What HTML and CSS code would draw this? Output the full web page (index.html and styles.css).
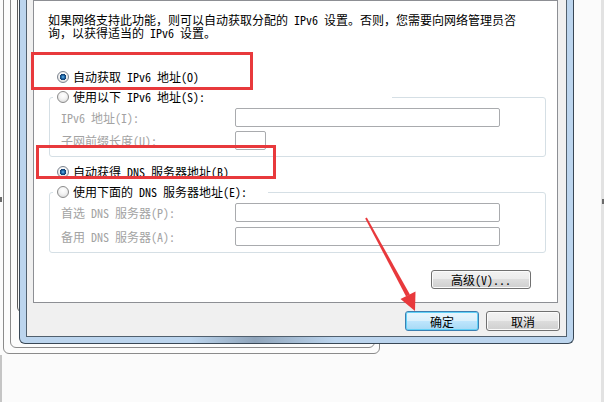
FILE: index.html
```html
<!DOCTYPE html>
<html>
    <head>
        <meta charset="utf-8">
        <title>Internet 协议版本 6 (TCP/IPv6) 属性</title>
        <link rel="stylesheet" href="styles.css">
    </head>
    <body>
        <div class="desk">
            <div class="win win-outer"></div>
            <div class="win win-middle"></div>
            <div class="win win-inner"></div>
            <div class="edge-left"></div>
            <div class="edge-right"></div>
            <div class="tick tick-left"></div>
            <div class="tick tick-right"></div>

            <div class="dialog">
                <div class="face">
                    <div class="panel">
                        <p class="intro"><span class="line">如果网络支持此功能<span class="fw">，</span>则可以自动获取分配的 IPv6 设置<span class="fw">。</span>否则<span class="fw">，</span>您需要向网络管理员咨</span><span class="line">询<span class="fw">，</span>以获得适当的 IPv6 设置<span class="fw">。</span></span></p>

                        <div class="option first"><span class="radio checked"></span>自动获取 IPv6 地址(O)</div>
                        <fieldset class="group">
                            <legend class="option legend-ip"><span class="radio"></span>使用以下 IPv6 地址(S):</legend>
                            <div class="fields">
                                <span class="off">IPv6 地址(I):</span><span class="box wide"></span>
                                <span class="off">子网前缀长度(U):</span><span class="box narrow"></span>
                            </div>
                        </fieldset>

                        <div class="option second"><span class="radio checked"></span>自动获得 DNS 服务器地址(B)</div>
                        <fieldset class="group">
                            <legend class="option legend-dns"><span class="radio"></span>使用下面的 DNS 服务器地址(E):</legend>
                            <div class="fields dns">
                                <span class="off">首选 DNS 服务器(P):</span><span class="box wide"></span>
                                <span class="off">备用 DNS 服务器(A):</span><span class="box wide"></span>
                            </div>
                        </fieldset>

                        <div class="adv-row"><button class="btn adv">高级(V)...</button></div>
                    </div>
                    <div class="actions">
                        <button class="btn default">确定</button>
                        <button class="btn">取消</button>
                    </div>
                </div>
            </div>

            <!-- 标注 -->
            <div class="note note-ip"></div>
            <div class="note note-dns"></div>
            <svg class="arrow" width="604" height="402" viewBox="0 0 604 402">
                <polygon points="365.2,218.4 366.8,217.6 409.9,294.6 406.1,296.4" fill="#e8393c"/>
                <polygon points="415,311 400.5,299 415.5,291.5" fill="#e8393c"/>
            </svg>
        </div>
    </body>
</html>
```

FILE: styles.css
```css
body{
    margin: 0;
    background-color: #fbfbfb;
    font-family: "Noto Sans CJK SC", sans-serif;
    font-size: 12px;
    font-feature-settings: "hwid" 1;
    color: #000;
}
.desk{
    position: relative;
    width: 604px;
    height: 402px;
    overflow: hidden;
}

/* 뒤에 깔린 창들 */
.win{
    position: absolute;
    top: -10px;
    box-sizing: border-box;
    border: 1px solid #8b8b8b;
    border-radius: 0 0 6px 6px;
    background-color: #fcfcfc;
}
.win-outer{
    left: 3px;
    width: 377px;
    height: 364px;
}
.win-middle{
    left: 10px;
    width: 365px;
    height: 358px;
}
.win-inner{
    left: 17px;
    width: 200px;
    height: 323px;
    border-color: #5c5c5c;
}
.edge-left{
    position: absolute;
    left: 0;
    top: 355px;
    width: 2px;
    height: 47px;
    background-color: #c5c5c5;
}
.edge-right{
    position: absolute;
    right: 0;
    top: 0;
    width: 3px;
    height: 402px;
    background-color: #e2e2e2;
}
.tick{
    position: absolute;
    width: 2px;
    height: 5px;
    background-color: #6a6a6a;
}
.tick-left{
    left: 0;
    top: 197px;
}
.tick-right{
    left: 602px;
    top: 199px;
}

/* 대화상자 */
.dialog{
    position: absolute;
    left: 19px;
    top: 0;
    width: 555px;
    height: 344px;
    box-sizing: border-box;
    border: 1px solid #394856;
    border-top: none;
    border-radius: 0 0 6px 6px;
    padding: 0 6px 6px;
    background: linear-gradient(90deg, #bcd5ee 0, #bcd5ee 170px, #8fa4ba 235px, #bcd5ee 315px, #bcd5ee 100%);
}
.face{
    height: 100%;
    box-sizing: border-box;
    border: 1px solid #51606e;
    border-top: none;
    padding: 0 8px 0 6px;
    background-color: #f0f0f0;
    display: flex;
    flex-direction: column;
}
.panel{
    height: 303px;
    box-sizing: border-box;
    border: 1px solid #8d8f94;
    background-color: #fff;
    padding: 12px 11px 0 14px;
}
.intro{
    margin: 0;
    white-space: nowrap;
}
.intro .line{
    display: block;
    height: 13px;
    line-height: 13px;
}
.fw{
    font-feature-settings: normal;    /* 전각 문장부호는 그대로 */
}
.option{
    display: flex;
    align-items: center;
    height: 14px;
    line-height: 14px;
    white-space: nowrap;
}
.option.first{
    margin: 31px 0 0 9px;
}
.option.second{
    margin: 8px 0 0 9px;
}
.radio{
    flex: none;
    width: 12px;
    height: 12px;
    box-sizing: border-box;
    border: 1px solid #8b8b8b;
    border-radius: 50%;
    margin-right: 4px;
    background: radial-gradient(circle at 50% 35%, #ffffff 0, #f3f3f3 45%, #d2d2d2 100%);
}
.radio.checked{
    border-color: #7d8590;
    background: radial-gradient(circle, #6cc0ee 0, #2468a8 1.6px, #0f3c6d 3px, rgba(255,255,255,0) 3.4px),
                radial-gradient(circle at 50% 35%, #ffffff 0, #f3f3f3 45%, #d2d2d2 100%);
}

.group{
    margin: 6px 0 0 1px;
    border: 1px solid #d5dfe5;
    border-radius: 3px;
    padding: 4px 0 6px 3px;
    min-width: 0;
}
.group legend{
    box-sizing: border-box;
    padding: 0 0 0 4px;
    margin: 0;
    background-color: #fff;
}
.legend-ip{
    width: 339px;
}
.legend-dns{
    width: 215px;
}
.fields{
    display: grid;
    grid-template-columns: 174px auto;
    row-gap: 4px;
    align-items: center;
    padding-left: 8px;
}
.fields.dns{
    row-gap: 5px;
}
.off{
    color: #a3a3a3;
    white-space: nowrap;
}
.box{
    display: block;
    height: 19px;
    box-sizing: border-box;
    border: 1px solid #a9abae;
    border-radius: 2px;
    background-color: #fff;
}
.wide{
    width: 265px;
}
.narrow{
    width: 31px;
}

/* 버튼 */
.btn{
    font: inherit;
    color: #000;
    height: 20px;
    width: 74px;
    padding: 0;
    box-sizing: border-box;
    border: 1px solid #707070;
    border-radius: 3px;
    background: linear-gradient(#f2f2f2 0, #ebebeb 50%, #dddddd 50%, #cfcfcf 100%);
    box-shadow: inset 0 0 0 1px #fbfbfb;
}
.btn.default{
    border-color: #3c7fb1;
    background: linear-gradient(#eaf6fd 0, #d9f0fc 50%, #bee6fd 50%, #a7d9f5 100%);
    box-shadow: inset 0 0 0 1px #62d1f7;
}
.adv-row{
    display: flex;
    justify-content: flex-end;
    margin: 17px 15px 0 0;
}
.btn.adv{
    width: 100px;
    height: 19px;
}
.actions{
    display: flex;
    justify-content: flex-end;
    gap: 7px;
    padding-top: 8px;
    margin-right: -2px;
}

/* 빨간 표시 */
.note{
    position: absolute;
    box-sizing: border-box;
    border: 3px solid #e8393c;
}
.note-ip{
    left: 31px;
    top: 52px;
    width: 222px;
    height: 38px;
}
.note-dns{
    left: 36px;
    top: 145px;
    width: 240px;
    height: 34px;
}
.arrow{
    position: absolute;
    left: 0;
    top: 0;
}
```
